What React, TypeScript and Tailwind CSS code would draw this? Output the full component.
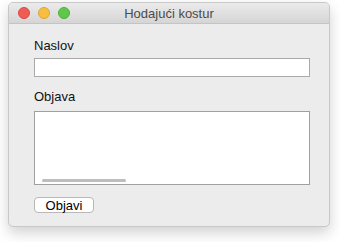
import React from "react";

const TrafficLights = () => {
  return (
    <div className="absolute left-[9px] top-[4px] flex gap-[8px]">
      <span className="w-[12px] h-[12px] rounded-full bg-[#ee5c54] border border-[#d74a43]" />
      <span className="w-[12px] h-[12px] rounded-full bg-[#f8be3f] border border-[#dea33a]" />
      <span className="w-[12px] h-[12px] rounded-full bg-[#5fc84b] border border-[#4fae3b]" />
    </div>
  );
};

export default function App() {
  return (
    <div
      className="w-[340px] h-[242px] bg-white pt-[2px] pl-[8px]"
      style={{ fontFamily: '"Liberation Sans", Arial, sans-serif' }}
    >
      <div className="w-[322px] h-[225px] rounded-[5px] bg-[#ececec] border border-[#c8c8c8] shadow-[0_6px_14px_rgba(0,0,0,0.18)] flex flex-col overflow-hidden">
        {/* title bar */}
        <div className="relative h-[21px] shrink-0 bg-gradient-to-b from-[#ebebeb] to-[#d5d5d5] border-b border-[#c4c4c4] flex items-center justify-center">
          <TrafficLights />
          <span className="text-[13px] text-[#4b4b4b] leading-none">Hodajući kostur</span>
        </div>

        {/* body */}
        <div className="flex flex-col pl-[25px] pr-[19px] pt-[14px]">
          <label className="text-[13px] leading-[16px] text-[#111]">Naslov</label>
          <input
            className="mt-[4px] h-[19px] w-full bg-white border border-[#a9a9a9] outline-none"
            defaultValue=""
          />
          <label className="mt-[12px] text-[13px] leading-[16px] text-[#111]">Objava</label>
          <div className="relative mt-[6px] h-[74px] w-full bg-white border border-[#a0a0a0]">
            <div className="absolute left-[7px] bottom-[2px] w-[84px] h-[3px] rounded-full bg-[#bdbdbd]" />
          </div>
          <div className="mt-[12px]">
            <button className="h-[16px] w-[60px] bg-white border border-[#b8b8b8] rounded-[4px] text-[13px] leading-none text-black flex items-center justify-center">
              Objavi
            </button>
          </div>
        </div>
      </div>
    </div>
  );
}
